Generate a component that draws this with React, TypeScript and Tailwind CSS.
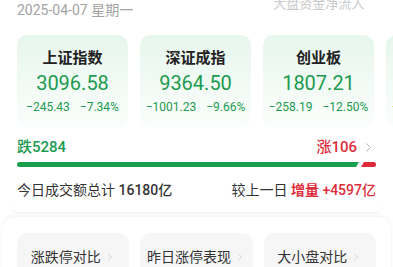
import React from "react";
import { ChevronRight } from "lucide-react";

const FONT = "font-['Roboto','Noto_Sans_CJK_SC',sans-serif]";

type Idx = { name: string; value: string; chg: string; pct: string };

const indices: Idx[] = [
  { name: "上证指数", value: "3096.58", chg: "−245.43", pct: "−7.34%" },
  { name: "深证成指", value: "9364.50", chg: "−1001.23", pct: "−9.66%" },
  { name: "创业板", value: "1807.21", chg: "−258.19", pct: "−12.50%" },
  { name: "北证50", value: "1108.62", chg: "−131.60", pct: "−10.62%" },
];

function IndexCard({ d }: { d: Idx }) {
  return (
    <div className="w-[111px] h-[93px] shrink-0 rounded-[10px] bg-gradient-to-b from-[#e7f6ed] to-[#fbfefc] flex flex-col items-center pt-[13px]">
      <div className="text-[15px] leading-[20px] font-bold text-[#222]">{d.name}</div>
      <div className="mt-[2px] text-[20px] leading-[26px] text-[#1c9a50]">{d.value}</div>
      <div className="mt-[3px] text-[12px] leading-[16px] text-[#1c9a50] flex gap-[10px] whitespace-nowrap">
        <span>{d.chg}</span>
        <span>{d.pct}</span>
      </div>
    </div>
  );
}

function Btn({ label }: { label: string }) {
  return (
    <div className="h-[48px] rounded-[10px] bg-[#f6f6f6] flex items-center justify-center gap-[3px]">
      <span className="text-[14px] leading-[20px] text-[#333]">{label}</span>
      <ChevronRight size={12} strokeWidth={1.5} className="text-[#c4c4c4]" />
    </div>
  );
}

export default function App() {
  return (
    <div className={`w-[393px] h-[267px] overflow-hidden bg-white ${FONT}`}>
      <div className="mx-[8px] px-[9px] pb-[12px] rounded-b-[12px] bg-white shadow-[0_3px_3px_-2px_rgba(0,0,0,0.07)]">
        <div className="flex items-start h-[20px]">
          <span className="text-[14px] leading-[20px] text-[#a3a3a3]">2025-04-07 星期一</span>
          <span className="ml-[140px] mt-[-6px] text-[13px] leading-[20px] text-[#c8c8c8]">大盘资金净流入</span>
        </div>
        <div className="mt-[15px] flex gap-[12px] w-[500px]">
          {indices.map((d) => (
            <IndexCard key={d.name} d={d} />
          ))}
        </div>
        <div className="mt-[9px] flex items-center justify-between h-[20px]">
          <span className="text-[15px] leading-[20px] font-medium text-[#1c9a50]">跌5284</span>
          <span className="flex items-center gap-[4px]">
            <span className="text-[15px] leading-[20px] font-medium text-[#dd2e3c]">涨106</span>
            <ChevronRight size={15} strokeWidth={1.5} className="text-[#b0b0b0]" />
          </span>
        </div>
        <div className="mt-[5px] flex h-[5px] gap-[2px] w-[359px]">
          <div className="flex-1 rounded-l-full bg-[#18a04c] [clip-path:polygon(0_0,100%_0,calc(100%-3px)_100%,0_100%)]" />
          <div className="w-[15px] rounded-r-full bg-[#e02a3a] [clip-path:polygon(3px_0,100%_0,100%_100%,0_100%)]" />
        </div>
        <div className="mt-[13px] flex items-center justify-between h-[20px] text-[14px] leading-[20px] text-[#333]">
          <span>
            今日成交额总计 <span className="font-medium">16180亿</span>
          </span>
          <span>
            较上一日 <span className="font-bold text-[#dd2e3c]">增量</span>{" "}
            <span className="font-medium text-[#dd2e3c]">+4597亿</span>
          </span>
        </div>
      </div>
      <div className="mt-[5px] mx-[2px] rounded-t-[14px] bg-white shadow-[0_-2px_4px_rgba(0,0,0,0.05)] px-[15px] pt-[16px] pb-[10px]">
        <div className="grid grid-cols-3 gap-[11px]">
          <Btn label="涨跌停对比" />
          <Btn label="昨日涨停表现" />
          <Btn label="大小盘对比" />
        </div>
      </div>
    </div>
  );
}
